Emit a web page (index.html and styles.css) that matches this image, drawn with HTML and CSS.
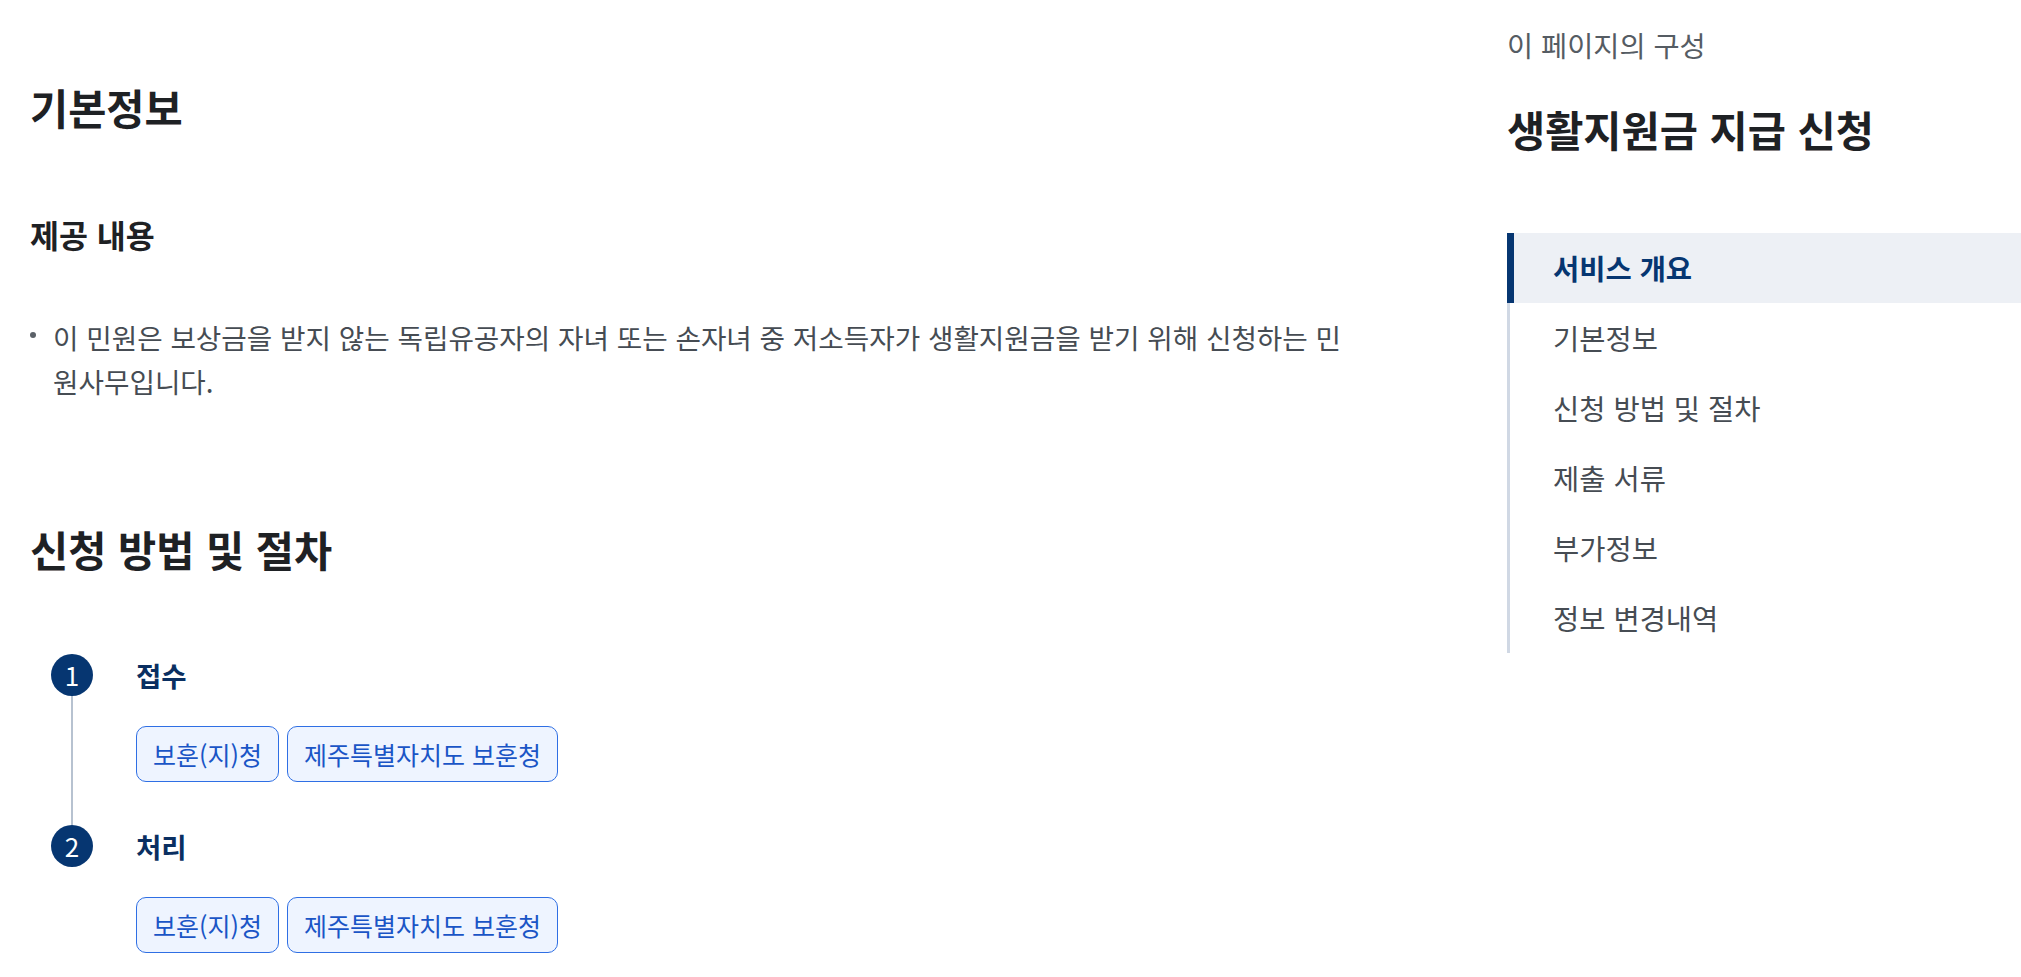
FILE: index.html
```html
<!DOCTYPE html>
<html lang="ko">
<head>
  <meta charset="utf-8">
  <title>생활지원금 지급 신청</title>
  <link rel="stylesheet" href="styles.css">
</head>
<body>
  <div class="page">
    <main class="main">
      <h2 class="title">기본정보</h2>
      <h3 class="sub-title">제공 내용</h3>
      <ul class="bullets">
        <li><span class="dot"></span><span>이 민원은 보상금을 받지 않는 독립유공자의 자녀 또는 손자녀 중 저소득자가 생활지원금을 받기 위해 신청하는 민원사무입니다.</span></li>
      </ul>

      <h2 class="title title-steps">신청 방법 및 절차</h2>
      <ol class="steps">
        <li class="step">
          <div class="step-mark">
            <span class="num">1</span>
            <span class="rail"></span>
          </div>
          <div class="step-body">
            <div class="step-name">접수</div>
            <div class="chips">
              <span class="chip">보훈(지)청</span>
              <span class="chip">제주특별자치도 보훈청</span>
            </div>
          </div>
        </li>
        <li class="step">
          <div class="step-mark">
            <span class="num">2</span>
          </div>
          <div class="step-body">
            <div class="step-name">처리</div>
            <div class="chips">
              <span class="chip">보훈(지)청</span>
              <span class="chip">제주특별자치도 보훈청</span>
            </div>
          </div>
        </li>
      </ol>
    </main>

    <aside class="toc">
      <p class="toc-label">이 페이지의 구성</p>
      <h2 class="toc-title">생활지원금 지급 신청</h2>
      <ul class="toc-list">
        <li class="active">서비스 개요</li>
        <li>기본정보</li>
        <li>신청 방법 및 절차</li>
        <li>제출 서류</li>
        <li>부가정보</li>
        <li>정보 변경내역</li>
      </ul>
    </aside>
  </div>
</body>
</html>
```

FILE: styles.css
```css
body {
  margin: 0;
  font-family: "Noto Sans CJK KR", "Noto Sans", sans-serif;
  color: #1e2124;
  background: #fff;
}
.page {
  display: flex;
  padding-left: 30px;
}
.main {
  width: 1325px;
  padding-top: 82px;
}
.title {
  margin: 0;
  font-size: 41.5px;
  line-height: 50px;
  font-weight: 700;
  color: #1e2124;
}
.sub-title {
  margin: 82px 0 0;
  font-size: 31.5px;
  line-height: 40px;
  font-weight: 700;
}
.bullets {
  list-style: none;
  margin: 61px 0 0;
  padding: 0;
}
.bullets li {
  display: flex;
  font-size: 27.7px;
  line-height: 44px;
  color: #464c53;
}
.dot {
  flex: none;
  width: 6px;
  height: 6px;
  margin: 17px 17px 0 0;
  border-radius: 50%;
  background: #5b6168;
}
.title-steps {
  margin-top: 121px;
}
.steps {
  list-style: none;
  margin: 80px 0 0;
  padding: 0 0 0 21px;
}
.step {
  display: grid;
  grid-template-columns: 42px 1fr;
  column-gap: 43px;
}
.step-mark {
  display: flex;
  flex-direction: column;
  align-items: center;
}
.num {
  flex: none;
  width: 42px;
  height: 42px;
  border-radius: 50%;
  background: #063671;
  color: #fff;
  font-size: 26px;
  font-weight: 400;
  line-height: 42px;
  text-align: center;
}
.rail {
  flex: 1;
  width: 2px;
  background: #b7c2d0;
}
.step-body {
  padding-bottom: 43px;
}
.step-name {
  font-size: 27.5px;
  line-height: 42px;
  font-weight: 700;
  color: #0a2f61;
}
.chips {
  display: flex;
  gap: 8px;
  margin-top: 30px;
}
.chip {
  display: inline-flex;
  align-items: center;
  height: 56px;
  box-sizing: border-box;
  padding: 0 16px;
  border: 1px solid #2f6fe4;
  border-radius: 10px;
  background: #eef4ff;
  color: #1a55c6;
  font-size: 25px;
}
.toc {
  flex: 1;
  margin-left: 152px;
  padding-top: 25px;
}
.toc-label {
  margin: 0;
  font-size: 28.4px;
  line-height: 40px;
  color: #555c63;
}
.toc-title {
  margin: 39px 0 0;
  font-size: 41.5px;
  line-height: 50px;
  font-weight: 700;
}
.toc-list {
  list-style: none;
  margin: 79px 0 0;
  padding: 0;
  border-left: 3px solid #d0d8e4;
}
.toc-list li {
  height: 70px;
  line-height: 70px;
  padding-left: 43px;
  font-size: 28.5px;
  color: #464c53;
}
.toc-list li.active {
  margin-left: -3px;
  padding-left: 39px;
  border-left: 7px solid #063671;
  background: #edf0f5;
  color: #063671;
  font-weight: 700;
}
```
